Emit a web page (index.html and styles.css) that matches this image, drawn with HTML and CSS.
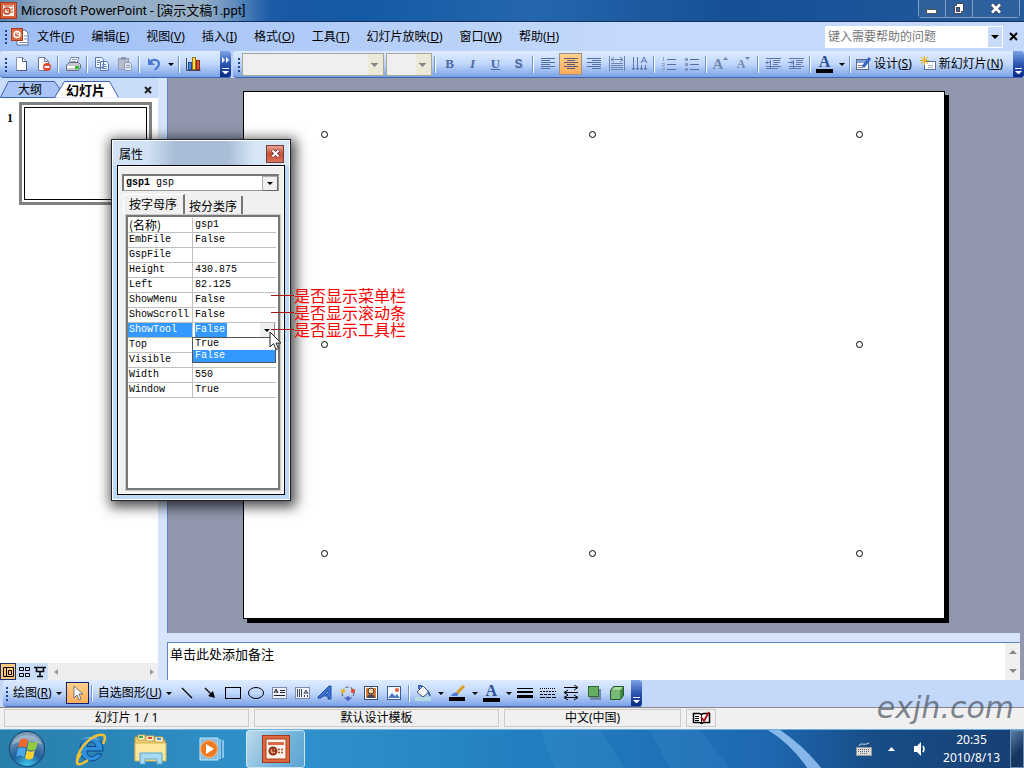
FILE: index.html
```
<!DOCTYPE html>
<html lang="zh-CN">
<head>
  <meta charset="UTF-8">
  <meta name="viewport" content="width=device-width, initial-scale=1.0">
  <title>Microsoft PowerPoint - [演示文稿1.ppt]</title>
  <link rel="stylesheet" href="styles.css">
</head>
<body>
  <!-- Title bar -->
  <header class="titlebar">
    <svg class="app-icon" width="17" height="17" viewBox="0 0 17 17"><rect x="0.5" y="0.5" width="16" height="16" fill="#d9603a" stroke="#a83a1c"/><rect x="3" y="3" width="11" height="11" fill="#fff3ea"/><circle cx="7" cy="9" r="3" fill="none" stroke="#b8431f" stroke-width="1.5"/><path d="M7 9V6M7 9h3M11 7h2M11 10h2M4 4h9" stroke="#b8431f"/></svg>
    <h1>Microsoft PowerPoint - [演示文稿1.ppt]</h1>
    <div class="window-buttons">
      <button aria-label="最小化"><svg width="14" height="14"><rect x="1.5" y="7.5" width="10" height="4" fill="#fff" stroke="#555"/></svg></button>
      <button aria-label="还原"><svg width="14" height="14"><path d="M4.5 1.5h7v8h-2v2h-7v-8h2z" fill="#fff" stroke="#445"/><rect x="4.5" y="5.5" width="3" height="4" fill="#3c6598" stroke="#445"/></svg></button>
      <button class="wide" aria-label="关闭"><svg width="14" height="14"><path d="M3 2.5l8 8M11 2.5l-8 8" stroke="#445" stroke-width="4.5"/><path d="M3 2.5l8 8M11 2.5l-8 8" stroke="#fff" stroke-width="2.6"/></svg></button>
    </div>
  </header>

  <!-- Menu bar -->
  <nav class="menubar">
    <span class="grip"></span>
    <svg class="doc-icon" width="18" height="18" viewBox="0 0 18 18"><path d="M6 2h8l3 3v12H6z" fill="#fff" stroke="#5870a0"/><path d="M13 8h3M13 11h3M8 14.5h8" stroke="#7a8dbb"/><rect x="0.5" y="0.5" width="11" height="12" fill="#dc6a42" stroke="#a83a1c"/><circle cx="6" cy="6.5" r="3" fill="none" stroke="#fff" stroke-width="1.5"/><path d="M6 3.5v3h3" stroke="#fff" fill="none"/></svg>
    <button>文件(<u>F</u>)</button>
    <button>编辑(<u>E</u>)</button>
    <button>视图(<u>V</u>)</button>
    <button>插入(<u>I</u>)</button>
    <button>格式(<u>O</u>)</button>
    <button>工具(<u>T</u>)</button>
    <button>幻灯片放映(<u>D</u>)</button>
    <button>窗口(<u>W</u>)</button>
    <button>帮助(<u>H</u>)</button>
    <div class="help-box">
      <input type="text" placeholder="键入需要帮助的问题" aria-label="键入需要帮助的问题">
      <button aria-label="展开"><span class="caret"></span></button>
    </div>
    <button class="close-doc" aria-label="关闭窗口"><svg width="9" height="9"><path d="M1 1l7 7M8 1l-7 7" stroke="#000" stroke-width="2"/></svg></button>
  </nav>

  <!-- Toolbars -->
  <div class="toolbars">
    <div class="toolbar standard">
      <span class="grip"></span>
      <button class="tool" aria-label="新建"><svg width="16" height="16"><path d="M3.5 1.5h6l4 4v9h-10z" fill="#fff" stroke="#8794b5"/><path d="M9.5 1.5v4h4v9h-10" fill="none" stroke="#4a587e"/></svg></button>
      <button class="tool" aria-label="权限"><svg width="16" height="16"><path d="M2.5 1.5h6l4 4v9h-10z" fill="#fff" stroke="#6d7a9c"/><path d="M8.5 1.5v4h4" fill="none" stroke="#6d7a9c"/><circle cx="11" cy="11" r="4" fill="#e04a2c"/><rect x="8.5" y="10" width="5" height="2" fill="#fff"/></svg></button>
      <span class="sep"></span>
      <button class="tool" aria-label="打印"><svg width="16" height="16"><path d="M6 1.5h8l-2 6H4z" fill="#fff" stroke="#7482a5"/><path d="M1.500 9l3-2.500h9l2 2V12l-2 2.500h-12z" fill="#c4c8ce" stroke="#666f80"/><path d="M7 3.500h5M6 5.500h5" stroke="#8c9bc0"/><rect x="2" y="10" width="9" height="2" fill="#fff"/><rect x="10" y="10" width="4" height="3" fill="#2fbd3a"/></svg></button>
      <span class="sep"></span>
      <button class="tool" aria-label="复制"><svg width="16" height="16"><path d="M1.5 1.5h6l2 2v8h-8zM6.5 5.5h6l2 2v7h-8z" fill="#eef4ff" stroke="#5878b8"/><path d="M3 4.5h3M3 6.5h3M3 8.5h2M8 8.5h4M8 10.5h5M8 12.5h5" stroke="#6f90cd"/></svg></button>
      <button class="tool" aria-label="粘贴"><svg width="16" height="16"><rect x="1.5" y="2.5" width="10" height="11" fill="#b5bdce" stroke="#929cb3"/><rect x="4" y="1" width="5" height="3" fill="#8e99b3"/><path d="M7.5 6.5h5l2 2v6h-7z" fill="#dce3f2" stroke="#929cb3"/><path d="M9 9.5h4M9 11.5h4" stroke="#929cb3"/></svg></button>
      <span class="sep"></span>
      <button class="tool" aria-label="撤消"><svg width="16" height="16"><path d="M4 6c3-4 9-2 9 2 0 3-3 4-4 6" fill="none" stroke="#4a7bd4" stroke-width="2.2"/><path d="M2 2v7h7z" fill="#4a7bd4"/></svg></button>
      <button class="drop" aria-label="撤消列表"><span class="caret"></span></button>
      <span class="sep"></span>
      <button class="tool" aria-label="插入图表"><svg width="17" height="16"><path d="M1.5 2v12.5h14" fill="none" stroke="#445"/><rect x="3.5" y="6.5" width="3" height="7" fill="#4b83e0" stroke="#26488e"/><rect x="7.5" y="1.5" width="3" height="12" fill="#ffe04a" stroke="#9a7412"/><rect x="11.5" y="4.5" width="3" height="9" fill="#dc5430" stroke="#872b15"/></svg></button>
      <button class="more" aria-label="工具栏选项"><svg width="8" height="6"><path d="M0 0l3 3-3 3zM4 0l3 3-3 3z" fill="#fff"/></svg><i></i></button>
    </div>
    <div class="toolbar formatting">
      <span class="grip"></span>
      <select class="font-name" aria-label="字体" disabled><option></option></select>
      <select class="font-size" aria-label="字号" disabled><option></option></select>
      <span class="sep"></span>
      <button class="tool letter">B</button>
      <button class="tool letter italic">I</button>
      <button class="tool letter underline">U</button>
      <button class="tool letter shadow">S</button>
      <span class="sep"></span>
      <button class="tool" aria-label="左对齐"><svg width="16" height="16"><path d="M1 2.5h14M1 4.5h9M1 6.5h14M1 8.5h9M1 10.5h14M1 12.5h9" stroke="#5570a8"/></svg></button>
      <button class="tool pressed" aria-label="居中"><svg width="16" height="16"><path d="M1 2.5h14M4 4.5h8M1 6.5h14M4 8.5h8M1 10.5h14M4 12.5h8" stroke="#5b5d7c"/></svg></button>
      <button class="tool" aria-label="右对齐"><svg width="16" height="16"><path d="M1 2.5h14M6 4.5h9M1 6.5h14M6 8.5h9M1 10.5h14M6 12.5h9" stroke="#5570a8"/></svg></button>
      <button class="tool" aria-label="分散对齐"><svg width="16" height="16"><path d="M0.500 0v15M15.500 0v15M2 3.500h12M5 1l-3 2.500L5 6M11 1l3 2.500L11 6M2 7.500h12M2 9.500h12M2 11.500h12M2 13.500h12" stroke="#6b82b3" fill="none"/></svg></button>
      <button class="tool" aria-label="文字方向"><svg width="16" height="16"><path d="M1.5 1v13M5.5 1v13M9.5 9v5M13.5 9v5M0 12l1.5 2L3 12M4 12l1.5 2L7 12M8 12l1.5 2 1.5-2M12 12l1.5 2 1.5-2M9 7l3-6 3 6M10 5h4" stroke="#5e77ad" fill="none"/></svg></button>
      <span class="sep"></span>
      <button class="tool" aria-label="编号"><svg width="16" height="16"><path d="M6 3.5h9M6 8.5h9M6 13.5h9" stroke="#5570a8"/><path d="M2.5 1v4M1 7.5h2.5v1L1 10h3M1 12.5h3l-2 1h2l-3 1.5" stroke="#93a2c2" fill="none"/></svg></button>
      <button class="tool" aria-label="项目符号"><svg width="16" height="16"><path d="M6 3.5h9M6 8.5h9M6 13.5h9" stroke="#5570a8"/><path d="M1 3.5h3M1 8.5h3M1 13.5h3" stroke="#8697bd" stroke-width="3"/></svg></button>
      <span class="sep"></span>
      <button class="tool letter light" aria-label="增大字号">A<svg width="5" height="16"><path d="M0 4l2.500-3L5 4z" fill="#7286b0"/></svg></button>
      <button class="tool letter light small" aria-label="减小字号">A<svg width="5" height="16"><path d="M0 1h5L2.500 4z" fill="#7286b0"/></svg></button>
      <span class="sep"></span>
      <button class="tool" aria-label="减少缩进量"><svg width="16" height="16"><path d="M1 2.5h15M8 4.5h7M8 6.5h7M8 8.5h5M1 10.5h15M1 12.5h12M5.5 4v9M1 6.5h5M3 4.5l-2 2 2 2" stroke="#6078ae" fill="none"/></svg></button>
      <button class="tool" aria-label="增加缩进量"><svg width="16" height="16"><path d="M1 2.5h15M8 4.5h7M8 6.5h7M8 8.5h5M1 10.5h15M1 12.5h12M5.5 4v9M0 6.5h5M3 4.5l2 2-2 2" stroke="#6078ae" fill="none"/></svg></button>
      <span class="sep"></span>
      <button class="tool letter color" aria-label="字体颜色">A</button>
      <button class="drop" aria-label="字体颜色列表"><span class="caret"></span></button>
      <span class="sep"></span>
      <button class="labelled"><svg width="17" height="16"><rect x="1.5" y="3.5" width="12" height="10" fill="#f4f6fb" stroke="#5b6780"/><rect x="2" y="4" width="11" height="3" fill="#7ea3dc"/><path d="M3 9.5h5M3 11.5h5" stroke="#888"/><path d="M8 11l7-9" stroke="#3766c4" stroke-width="3"/></svg><span>设计(<u>S</u>)</span></button>
      <button class="labelled"><svg width="17" height="16"><rect x="4.5" y="5.5" width="11" height="8" fill="#fff" stroke="#5b6ea0"/><path d="M8 9.5h5M8 11.5h5" stroke="#a9b6d4"/><path d="M4.5 0v9M0 4.5h9M1 1l7 7M8 1L1 8" stroke="#f2b51d"/></svg><span>新幻灯片(<u>N</u>)</span></button>
      <button class="more" aria-label="工具栏选项"><i></i></button>
    </div>
  </div>

  <!-- Work area -->
  <main class="workspace">
    <aside class="outline-pane">
      <div class="pane-tabs">
        <svg class="tab-shapes" width="124" height="19"><path d="M0.5 18.5L8.5 2.5h46l5 7-3 9z" fill="#a9c4f5" stroke="#3c62b4"/><path d="M54.5 18.5L64.5 2.5h45l9 16" fill="#fff" stroke="#3c62b4"/></svg>
        <button>大纲</button>
        <button class="active">幻灯片</button>
        <button class="close-pane" aria-label="关闭"><svg width="8" height="8"><path d="M1 1l6 6M7 1l-6 6" stroke="#222" stroke-width="2"/></svg></button>
      </div>
      <div class="thumbs">
        <span class="num">1</span>
        <div class="thumb"><div></div></div>
      </div>
      <div class="view-bar">
        <button class="on" aria-label="普通视图"><svg width="12" height="12"><path d="M1.5 1.5h10v9h-10zM4.5 1.5v9M6.500 4.500h3v4h-3z" fill="none" stroke="#000"/></svg></button>
        <button aria-label="幻灯片浏览视图"><svg width="12" height="12"><path d="M1.5 1.5h4v3h-4zM7.5 1.5h4v3h-4zM1.5 7.5h4v3h-4zM7.5 7.5h4v3h-4z" fill="none" stroke="#000"/></svg></button>
        <button aria-label="幻灯片放映"><svg width="12" height="12"><path d="M0 1.5h12M2.5 1.5v4h7v-4M6 6v4M3 10.5h6" fill="none" stroke="#000" stroke-width="1.5"/></svg></button>
        <div class="hscroll"><span></span><span></span></div>
      </div>
    </aside>

    <section class="editor">
      <div class="canvas">
        <div class="slide">
          <i></i><i></i><i></i>
          <i></i><b></b><i></i>
          <i></i><i></i><i></i>
        </div>
      </div>
      <div class="notes">
        <p>单击此处添加备注</p>
        <div class="vscroll"><span></span><span></span></div>
      </div>
    </section>
  </main>

  <!-- Drawing toolbar -->
  <div class="drawbar">
    <div class="toolbar">
      <span class="grip"></span>
      <button class="menu"><span>绘图(<u>R</u>)</span><span class="caret"></span></button>
      <button class="tool pressed select" aria-label="选择对象"><svg width="16" height="16"><path d="M5 1v12l3-3 2 5 2-1-2-5h4z" fill="#fff" stroke="#6b7080"/></svg></button>
      <span class="sep"></span>
      <button class="menu"><span>自选图形(<u>U</u>)</span><span class="caret"></span></button>
      <button class="tool" aria-label="直线"><svg width="16" height="16"><path d="M3 3l10 10" stroke="#000" stroke-width="1.2"/></svg></button>
      <button class="tool" aria-label="箭头"><svg width="16" height="16"><path d="M3 3l6 6" stroke="#000" stroke-width="1.2"/><path d="M13 13l-2-7-5 5z"/></svg></button>
      <button class="tool" aria-label="矩形"><svg width="16" height="16"><rect x="0.5" y="2.5" width="15" height="11" fill="none" stroke="#000"/></svg></button>
      <button class="tool" aria-label="椭圆"><svg width="16" height="16"><ellipse cx="8" cy="8" rx="7.5" ry="5.5" fill="none" stroke="#000"/></svg></button>
      <button class="tool" aria-label="文本框"><svg width="16" height="16"><rect x="1.5" y="2.5" width="14" height="11" fill="#eef2fa" stroke="#7e8bab"/><path d="M3 8l2-4 2 4M4 7h3M9 5.5h5M9 7.5h5M3 10.5h11" stroke="#222" fill="none"/></svg></button>
      <button class="tool" aria-label="竖排文本框"><svg width="16" height="16"><rect x="1.5" y="2.5" width="14" height="11" fill="#eef2fa" stroke="#7e8bab"/><path d="M3.5 4v8M5.5 4v8M7.5 4v8M10 9l2-4 2 4M10 8h4M10.5 10v2M13.5 10v2" stroke="#444b60" fill="none"/></svg></button>
      <button class="tool" aria-label="艺术字"><svg width="16" height="16"><path d="M1 12L12 1h2v13h-3v-3H6l-2 2H1zM8 9h3V5z" fill="#3d75d8" fill-rule="evenodd" stroke="#1f489c"/></svg></button>
      <button class="tool" aria-label="组织结构图"><svg width="16" height="16"><circle cx="8" cy="8" r="6" fill="none" stroke="#444" stroke-dasharray="3 2"/><circle cx="3" cy="6" r="2.2" fill="#e2b52e"/><circle cx="13" cy="6" r="2.2" fill="#d44e38"/><circle cx="8" cy="13.5" r="2.2" fill="#5066ce"/></svg></button>
      <button class="tool" aria-label="剪贴画"><svg width="16" height="16"><rect x="1.5" y="1.5" width="13" height="13" fill="#fff" stroke="#3b4a6c"/><rect x="3" y="3" width="10" height="10" fill="#e07b34"/><circle cx="8" cy="6" r="3" fill="#f3d0a4" stroke="#333"/><path d="M4 13c0-5 8-5 8 0z" fill="#454c5f"/></svg></button>
      <button class="tool" aria-label="图片"><svg width="16" height="16"><rect x="1.5" y="1.5" width="13" height="13" fill="#f4f8ff" stroke="#3b5a9c"/><path d="M2 13l4-5 3 3 2-2 3 4z" fill="#4c79c6"/><circle cx="11" cy="5" r="2" fill="#e5603a"/></svg></button>
      <span class="sep"></span>
      <button class="tool" aria-label="填充颜色"><svg width="16" height="16"><rect x="0" y="12" width="16" height="4" fill="#b6dce6"/><path d="M2 7l6-6 6 6-6 5z" fill="#f5f5f5" stroke="#44516f"/><path d="M4 4V1h3M13 6l2 5" stroke="#3867b8" stroke-width="2" fill="none"/></svg></button>
      <button class="drop" aria-label="填充颜色列表"><span class="caret"></span></button>
      <button class="tool" aria-label="线条颜色"><svg width="16" height="16"><rect x="0" y="12" width="16" height="4"/><path d="M2 11c2-4 5-4 8-3l-2 3z" fill="#4a7ad2"/><path d="M8 8l7-7" stroke="#dc9b20" stroke-width="3"/></svg></button>
      <button class="drop" aria-label="线条颜色列表"><span class="caret"></span></button>
      <button class="tool letter color" aria-label="字体颜色">A</button>
      <button class="drop" aria-label="字体颜色列表"><span class="caret"></span></button>
      <button class="tool" aria-label="线型"><svg width="16" height="16"><path d="M0 3.5h16"  stroke="#000"/><path d="M0 7h16" stroke="#000" stroke-width="2"/><path d="M0 11.5h16" stroke="#000" stroke-width="3"/></svg></button>
      <button class="tool" aria-label="虚线线型"><svg width="16" height="16"><path d="M0 3.5h16" stroke="#000" stroke-dasharray="1 1"/><path d="M0 6.5h16" stroke="#000" stroke-dasharray="2 1"/><path d="M0 9.5h16" stroke="#000" stroke-dasharray="3 1"/><path d="M0 12.5h16" stroke="#000" stroke-dasharray="5 1"/></svg></button>
      <button class="tool" aria-label="箭头样式"><svg width="16" height="16"><path d="M1 2.5h13M2 7.5h13M2 12.5h12M11 0l4 2.5L11 5M5 5L1 7.5 5 10M5 10l-4 2.5L5 15M11 10l4 2.5-4 2.5" fill="none" stroke="#000"/></svg></button>
      <button class="tool" aria-label="阴影样式"><svg width="16" height="16"><rect x="4" y="4" width="11" height="11" fill="#7387aa"/><rect x="2.5" y="1.5" width="10" height="10" fill="#65ad61" stroke="#2e6c36"/></svg></button>
      <button class="tool" aria-label="三维效果样式"><svg width="16" height="16"><path d="M1.5 5.5l3-4h10v9l-3 4h-10z" fill="#3f8745" stroke="#24542b"/><path d="M2 6h9v8H2z" fill="#77bb72"/><path d="M5 2h9l-3 3.5H2.5z" fill="#a6d9a0"/></svg></button>
      <button class="more" aria-label="工具栏选项"><i></i></button>
    </div>
  </div>

  <!-- Status bar -->
  <footer class="statusbar">
    <span class="cell long">幻灯片 1 / 1</span>
    <span class="cell long">默认设计模板</span>
    <span class="cell lang">中文(中国)</span>
    <span class="cell spell"><svg width="19" height="14"><path d="M1.5 2.5h6l2 1 2-1h6v9h-6l-2 1-2-1h-6z" fill="#fff" stroke="#000" stroke-width="1.5"/><path d="M9.5 3v10M3 5.5h4M3 7.5h4M3 9.5h4" stroke="#000"/><path d="M9 6l3 4 5-9" fill="none" stroke="#b01818" stroke-width="2"/></svg></span>
    <span class="watermark">exjh.com</span>
  </footer>

  <!-- Windows taskbar -->
  <div class="taskbar">
    <svg class="streaks" width="100%" height="39" viewBox="0 0 1024 39" preserveAspectRatio="none"><path d="M540 0h60l25 39H555zM650 0h50l30 39h-60z" fill="#6ab8ee" opacity="0.100"/><path d="M768 0h12q24 16 42 39h-14Q792 15 768 0z" fill="#a9d4ff" opacity="0.750"/></svg>
    <button class="start" aria-label="开始"><svg width="38" height="38" viewBox="0 0 38 38"><defs><radialGradient id="orb" cx="0.5" cy="1" r="0.9"><stop offset="0" stop-color="#3fd0f5"/><stop offset="0.5" stop-color="#1f5f9c"/><stop offset="1" stop-color="#7c9cb8"/></radialGradient></defs><circle cx="19" cy="19" r="17.5" fill="url(#orb)" stroke="#123c66"/><path d="M4 15C8 2 30 2 34 15c-8-5-22-5-30 0z" fill="#fff" opacity="0.3"/><path d="M12 10c3-2 5-2 8 0l-2 8c-3-2-5-2-8 0z" fill="#ef6a2c"/><path d="M21 11c3 2 5 2 9 0l-2 8c-4 2-6 2-9 0z" fill="#93cc3c"/><path d="M10 19c3-2 5-2 8 0l-2 8c-3-2-5-2-8 0z" fill="#4aa8ea"/><path d="M19 20c3 2 5 2 8 0l-2 8c-3 2-5 2-8 0z" fill="#fbd02f"/></svg></button>
    <button aria-label="Internet Explorer"><svg width="34" height="34" viewBox="0 0 34 34"><path d="M29 22c-4 10-22 10-22-5C7 2 30 2 30 17v2H14c0 7 7 7 9 3zM14 14.500h9c-1-6-8-6-9 0z" fill="#2e8fdc" stroke="#0b4282" fill-rule="evenodd"/><path d="M9 8c4-4 14-5 18 1-6-3-12-3-18-1z" fill="#9bdcff" opacity="0.700"/><path d="M8 21C-1 35 7 34 15 28M4 29C5 14 22 1 30 3c3 1 2 5 0 9" fill="none" stroke="#f3c034" stroke-width="2.500"/></svg></button>
    <button aria-label="资源管理器"><svg width="34" height="34" viewBox="0 0 34 34"><path d="M2 5h10l2 3h18v20H2z" fill="#efcf72" stroke="#c39b38"/><path d="M5 3h7v5H5zM13 4h8v5h-8zM22 5h8v5h-8z" fill="#fff6d7" stroke="#c9a64c"/><path d="M6 4h4v2H6z" fill="#39a845"/><path d="M15 5h4v2h-4z" fill="#dc4b2e"/><path d="M24 6h4v2h-4z" fill="#3a9ad8"/><path d="M2 11h31v18H2z" fill="#fbe89d" stroke="#d6b456"/><path d="M7 32V21h22v11h-5v-5H12v5z" fill="#a6daf3" stroke="#5ba6cc"/></svg></button>
    <button aria-label="Windows Media Player"><svg width="34" height="34" viewBox="0 0 34 34"><path d="M7 6h18v22H7z" fill="#83bfe4" stroke="#c5e7fa"/><path d="M27 7v20M30 8v18" stroke="#a6d6f2" stroke-width="1.500"/><circle cx="16" cy="17" r="8.500" fill="#f07a22" stroke="#ffb475"/><path d="M13 12l8 5-8 5z" fill="#fff"/></svg></button>
    <button class="running" aria-label="Microsoft PowerPoint"><svg width="28" height="28" viewBox="0 0 28 28"><rect x="0.5" y="0.5" width="27" height="27" fill="#dc6842" stroke="#a63818"/><rect x="4" y="4" width="20" height="20" fill="#fff3ea" stroke="#a8401e"/><path d="M16 14.500h6M16 17.500h6" stroke="#b04a26" stroke-width="1.500" stroke-dasharray="2 1"/><rect x="6" y="7" width="16" height="3" fill="#d8694a"/><circle cx="11" cy="16" r="3.500" fill="#f0a080" stroke="#873015" stroke-width="2"/><path d="M11 13v3h4" stroke="#873015" fill="none" stroke-width="1.500"/></svg></button>
    <div class="tray">
      <svg width="16" height="15"><path d="M3 4c1-4 5 0 10-3" fill="none" stroke="#ddd"/><rect x="0.500" y="5.500" width="15" height="8" fill="#ddd" stroke="#999"/><path d="M2 7.500h12M2 9.500h12M4 11.500h8" stroke="#666" stroke-dasharray="1 1"/></svg>
      <svg width="10" height="6"><path d="M1 5h7L4.5 1z" fill="#fff"/></svg>
      <svg width="16" height="16"><path d="M2 5h3l4-4v14l-4-4H2z" fill="#fff"/><path d="M11 5q2 3 0 6" stroke="#fff" fill="none" stroke-width="1.5"/></svg>
    </div>
    <div class="clock"><time>20:35</time><time>2010/8/13</time></div>
    <button class="show-desktop" aria-label="显示桌面"></button>
  </div>

  <!-- Properties window -->
  <div class="properties" role="dialog" aria-labelledby="propTitle">
    <div class="prop-title">
      <h2 id="propTitle">属性</h2>
      <button aria-label="关闭"><svg width="9" height="9"><path d="M1.5 1.5l6 6M7.5 1.5l-6 6" stroke="#53313a" stroke-width="3.5"/><path d="M1.5 1.5l6 6M7.5 1.5l-6 6" stroke="#fff" stroke-width="2"/></svg></button>
    </div>
    <div class="prop-body">
      <button class="object-box" aria-haspopup="listbox"><span><b>gsp1</b> gsp</span><span class="arrow"><span class="caret"></span></span></button>
      <div class="prop-tabs">
        <button class="active">按字母序</button>
        <button>按分类序</button>
      </div>
      <div class="prop-frame">
        <table>
          <tr><th class="cjk">(名称)</th><td>gsp1</td></tr>
          <tr><th>EmbFile</th><td>False</td></tr>
          <tr><th>GspFile</th><td></td></tr>
          <tr><th>Height</th><td>430.875</td></tr>
          <tr><th>Left</th><td>82.125</td></tr>
          <tr><th>ShowMenu</th><td>False</td></tr>
          <tr><th>ShowScroll</th><td>False</td></tr>
          <tr class="current"><th><label for="showTool">ShowTool</label></th><td>
            <div class="edit"><input id="showTool" type="text" value="False"><button aria-label="展开"><span class="caret"></span></button></div>
            <ul class="options"><li>True</li><li class="selected">False</li></ul>
          </td></tr>
          <tr><th>Top</th><td></td></tr>
          <tr><th>Visible</th><td>True</td></tr>
          <tr><th>Width</th><td>550</td></tr>
          <tr><th>Window</th><td>True</td></tr>
        </table>
      </div>
    </div>
  </div>

  <!-- Callouts for the three properties -->
  <ul class="callouts">
    <li>是否显示菜单栏</li>
    <li>是否显示滚动条</li>
    <li>是否显示工具栏</li>
  </ul>
  <svg class="pointer" width="13" height="20" viewBox="0 0 13 20"><path d="M1 1v15l3.5-3.5L7 18.5l2.5-1L7 12h5z" fill="#fff" stroke="#222"/></svg>
</body>
</html>
```
FILE: styles.css
```
* {
  box-sizing: border-box;
}
body {
  margin: 0;
  height: 100vh;
  display: flex;
  flex-direction: column;
  overflow: hidden;
  position: relative;
  font-family: "Noto Sans", "Noto Sans CJK SC", sans-serif;
  font-size: 12px;
  line-height: 16px;
  color: #000;
  background: #c4d8f9;
}
button {
  font: inherit;
  color: inherit;
  padding: 0;
  border: none;
  background: none;
  white-space: nowrap;
}
svg {
  display: block;
  flex: none;
}
.caret {
  display: block;
  width: 6px;
  border: 3px solid transparent;
  border-top-color: #000;
  border-bottom: none;
}

/* Title bar */
.titlebar {
  flex: none;
  height: 22px;
  display: flex;
  align-items: center;
  background: linear-gradient(90deg, #5c84b0, #8fa9c4 40px, #97b0c8 200px, #5f8dbd 235px, #1a5aa6 270px, #1459a5 35%, #2467ad 52%, #154f95 72%, #235b9b);
  border-bottom: 1px solid #17305a;
}
.titlebar h1 {
  margin: 0 auto 0 4px;
  font-family: Roboto, "Noto Sans CJK SC", sans-serif;
  font-size: 13px;
  font-weight: normal;
}
.window-buttons {
  display: flex;
  align-self: flex-start;
  margin-right: 4px;
  border: 1px solid #7f9fc5;
  border-top: none;
  border-radius: 0 0 4px 4px;
}
.window-buttons button {
  width: 27px;
  height: 17px;
  display: flex;
  justify-content: center;
  align-items: center;
  background: #2d609c;
  border-right: 1px solid #7f9fc5;
}
.window-buttons .wide {
  width: 46px;
  border: none;
}

/* Menu bar */
.menubar {
  flex: none;
  height: 29px;
  display: flex;
  align-items: center;
  gap: 17px;
  padding: 0 6px 0 4px;
  background: linear-gradient(90deg, #9ebef5, #c4d9fb 60%);
}
.grip {
  flex: none;
  width: 5px;
  height: 15px;
  background: radial-gradient(circle at 2px 2px, #20418c 1px, transparent 1px) 0 0 / 5px 4px;
}
.menubar .grip {
  margin-right: -15px;
}
.doc-icon {
  margin-right: -9px;
}
.help-box {
  display: flex;
  width: 178px;
  height: 22px;
  margin-left: auto;
  margin-right: -11px;
  background: #fff;
}
.help-box input {
  flex: 1;
  min-width: 0;
  padding: 0 3px;
  border: none;
  font: inherit;
}
.help-box input::placeholder {
  color: #777;
}
.help-box button {
  width: 14px;
  margin: 1px;
  background: #c8dcfa;
  padding: 0 3px;
}
.help-box .caret {
  width: 8px;
  border-width: 4px;
  border-bottom: none;
}

/* Toolbars */
.toolbars {
  flex: none;
  display: flex;
  gap: 2px;
  height: 27px;
  background: #bcd3f8;
}
.toolbar {
  display: flex;
  align-items: center;
  height: 27px;
  padding-left: 4px;
  background: linear-gradient(#dfecff, #c0d7fb 50%, #7ba2e7);
  border-bottom: 1px solid #3f66b5;
  border-radius: 4px 2px 2px 4px;
}
.standard {
  flex: none;
  width: 231px;
}
.formatting {
  flex: 1;
}
.tool {
  flex: none;
  width: 23px;
  height: 22px;
  display: flex;
  align-items: center;
  justify-content: center;
}
.pressed {
  background: linear-gradient(#ffd08a, #ffad5c);
  border: 1px solid #98908a;
}
.select {
  border-color: #10206c;
}
.drop {
  width: 11px;
  padding-left: 3px;
}
.sep {
  flex: none;
  width: 6px;
  height: 17px;
  background: linear-gradient(90deg, transparent 2px, #6f93d0 2px, #6f93d0 3px, #fff 3px, #fff 4px, transparent 4px);
}
.more {
  flex: none;
  width: 11px;
  height: 26px;
  margin-left: auto;
  display: flex;
  flex-direction: column;
  align-items: center;
  justify-content: flex-end;
  gap: 5px;
  padding-bottom: 3px;
  background: linear-gradient(#7da3e8, #2c56b0 50%, #082a84);
  border-radius: 0 3px 3px 0;
}
.more i {
  width: 7px;
  height: 6px;
  background: linear-gradient(#fff 1px, transparent 1px);
}
.more i::after {
  content: "";
  display: block;
  border: 3px solid transparent;
  border-top-color: #fff;
  border-bottom: none;
  margin-top: 3px;
}
.toolbar select {
  flex: none;
  appearance: none;
  height: 23px;
  border: 1px solid #a5a79c;
  border-radius: 0;
  background: linear-gradient(135deg, #888 50%, transparent 50%) no-repeat right 4px top 9px / 4px 4px, linear-gradient(225deg, #888 50%, transparent 50%) no-repeat right 8px top 9px / 4px 4px, linear-gradient(#ece9d8, #ece9d8) no-repeat right / 15px 100%, #efefef;
  opacity: 1;
}
.toolbar .font-name {
  width: 142px;
  margin-right: 2px;
}
.toolbar .font-size {
  width: 46px;
}
.letter {
  font-family: "Liberation Serif", serif;
  font-weight: bold;
  font-size: 13px;
  color: #4d6aa6;
}
.italic {
  font-style: italic;
}
.underline {
  text-decoration: underline;
}
.shadow {
  font-family: "Liberation Sans", sans-serif;
  font-size: 12px;
  text-shadow: 1px 1px #a3b6db;
}
.light {
  color: #7286b0;
  font-size: 15px;
}
.light.small {
  font-size: 12px;
}
.color {
  color: #2d4f94;
  font-size: 16px;
  line-height: 14px;
}
.color.tool {
  width: 17px;
  height: 17px;
  margin: 0 3px;
  border-bottom: 4px solid #000;
}
.labelled {
  display: flex;
  align-items: center;
  gap: 2px;
  padding: 0 2px;
}
.labelled + .labelled {
  padding-left: 6px;
}

/* Work area */
.workspace {
  flex: 1;
  min-height: 0;
  display: flex;
}
.outline-pane {
  flex: none;
  width: 158px;
  display: flex;
  flex-direction: column;
  background: #fff;
}
.pane-tabs {
  position: relative;
  display: flex;
  align-items: flex-end;
  height: 20px;
  padding-left: 18px;
  background: #c9dcfa;
}
.tab-shapes {
  position: absolute;
  left: 0;
  bottom: 0;
}
.pane-tabs button {
  position: relative;
  height: 17px;
}
.pane-tabs .active {
  margin-left: 24px;
  font-size: 13px;
  font-weight: bold;
}
.pane-tabs .close-pane {
  margin: 0 6px 0 auto;
}
.thumbs {
  flex: 1;
  display: flex;
  align-items: flex-start;
  padding: 4px 6px 0 7px;
}
.num {
  width: 12px;
  padding-top: 8px;
  font-family: "Liberation Serif", serif;
  font-weight: bold;
}
.thumb {
  flex: 1;
  padding: 2px;
  border: 3px solid #808080;
}
.thumb div {
  height: 93px;
  border: 1px solid #000;
}
.view-bar {
  display: flex;
  height: 17px;
  background: #c9dcfa;
}
.view-bar button {
  width: 16px;
  display: flex;
  align-items: center;
  justify-content: center;
}
.view-bar .on {
  border: 1px solid #1d2c6c;
  background: #ffc77c;
}
.hscroll {
  flex: 1;
  display: flex;
  justify-content: space-between;
  align-items: center;
  padding: 0 4px 0 6px;
  background: #eee;
}
.hscroll span {
  border: 3px solid transparent;
  border-right: 4px solid #999;
  border-left: none;
}
.hscroll span + span {
  border-right: none;
  border-left: 4px solid #999;
}
.editor {
  flex: 1;
  min-width: 0;
  display: flex;
  flex-direction: column;
  border-left: 9px solid #d6e5fb;
  background: #9198ae;
}
.canvas {
  flex: 1;
  display: flex;
  padding: 13px 79px 14px 75px;
  border-left: 1px solid #5c85cc;
}
.slide {
  flex: 1;
  display: grid;
  grid-template-columns: repeat(3, 7px);
  grid-template-rows: repeat(3, 7px);
  justify-content: space-between;
  align-content: space-between;
  padding: 39px 81px 61px 77px;
  background: #fff;
  border: 1px solid #000;
  box-shadow: 4px 4px #000;
}
.slide i {
  border: 1px solid #000;
  border-radius: 50%;
}
.notes {
  height: 47px;
  display: flex;
  margin-right: 4px;
  background: #fff;
  border-top: 9px solid #d6e5fb;
  box-shadow: inset 1px 1px #5c85cc;
}
.notes p {
  flex: 1;
  margin: 4px 3px;
  font-size: 13px;
}
.vscroll {
  width: 15px;
  margin-top: 1px;
  display: flex;
  flex-direction: column;
  align-items: center;
  justify-content: space-between;
  padding: 7px 0;
  background: #f0f0f0;
}
.vscroll span {
  border: 4px solid transparent;
  border-bottom-color: #888;
  border-top: none;
}
.vscroll span + span {
  border-top: 4px solid #888;
  border-bottom: none;
}

/* Drawing toolbar */
.drawbar {
  flex: none;
  display: flex;
  padding-left: 3px;
}
.drawbar .toolbar {
  padding-left: 2px;
}
.menu {
  display: flex;
  align-items: center;
  gap: 4px;
  padding: 0 4px 0 3px;
}
.drawbar .more {
  margin-left: 2px;
}

/* Status bar */
.statusbar {
  flex: none;
  position: relative;
  height: 22px;
  display: flex;
  gap: 5px;
  padding: 1px 4px 2px;
  background: #f0f0f0;
  border-top: 1px solid #888;
}
.cell {
  display: flex;
  justify-content: center;
  align-items: center;
  border: 1px solid #ccc;
}
.long {
  width: 245px;
}
.lang {
  width: 177px;
}
.spell {
  width: 30px;
}
.watermark {
  position: absolute;
  right: 10px;
  bottom: 3px;
  font-family: "DejaVu Sans", sans-serif;
  font-style: italic;
  font-weight: 200;
  font-size: 30px;
  line-height: 36px;
  color: rgba(75, 82, 96, 0.7);
}

/* Taskbar */
.taskbar {
  flex: none;
  position: relative;
  height: 39px;
  display: flex;
  align-items: center;
  padding-left: 8px;
  background: linear-gradient(90deg, #287eab, #3093cd 28%, #2380c0 50%, #1e68b1 75%, #184d88 85%, #173f72);
  border-top: 1px solid #6cb0dd;
}
.streaks {
  position: absolute;
  left: 0;
  top: 0;
}
.taskbar button {
  position: relative;
  width: 60px;
  height: 38px;
  display: flex;
  align-items: center;
  justify-content: center;
}
.taskbar .start {
  width: 38px;
  margin-right: 14px;
}
.taskbar .running {
  width: 59px;
  margin-left: 6px;
  border: 1px solid #cbe5f5;
  border-radius: 3px;
  background: linear-gradient(120deg, #bcdaeb, #74b4da 60%, #5aa5d3);
}
.tray {
  position: relative;
  display: flex;
  align-items: center;
  gap: 15px;
  margin-left: auto;
}
.clock {
  position: relative;
  display: flex;
  flex-direction: column;
  align-items: center;
  margin: 0 10px 0 15px;
  line-height: 18px;
  color: #fff;
}
.taskbar .show-desktop {
  width: 14px;
  border: 1px solid #6d8fb3;
  background: linear-gradient(135deg, #5b7fa6, #16365f 60%);
}

/* Properties window */
.properties {
  position: absolute;
  left: 111px;
  top: 139px;
  width: 180px;
  height: 362px;
  display: flex;
  flex-direction: column;
  padding: 0 5px 5px;
  border: 1px solid #1c2531;
  box-shadow: inset 0 0 0 1px #fff, 2px 3px 12px 3px rgba(0, 0, 0, 0.7);
  background: linear-gradient(90deg, #d3e3f5 20%, #a9bdd6 35%, #a9bdd6 65%, #d8e7f7 80%) no-repeat top / 100% 26px, #bdd9f6;
  font-family: "Liberation Mono", "Noto Sans CJK SC", monospace;
  font-size: 10px;
  line-height: 14px;
}
.prop-title {
  height: 25px;
  display: flex;
  justify-content: space-between;
  align-items: center;
  padding: 2px 1px 0 2px;
}
.prop-title h2 {
  margin: 0;
  font-family: "Noto Sans CJK SC", sans-serif;
  font-size: 12px;
  font-weight: normal;
}
.prop-title button {
  width: 18px;
  height: 18px;
  display: flex;
  justify-content: center;
  align-items: center;
  border: 1px solid #7a3c38;
  background: linear-gradient(#e9a394, #c84c34 50%, #d97459);
}
.prop-body {
  flex: 1;
  display: flex;
  flex-direction: column;
  padding: 8px 3px 4px 4px;
  background: #f0f0f0;
  border: 1px solid #000;
  box-shadow: inset 0 0 0 1px #fff;
}
.object-box {
  display: flex;
  justify-content: space-between;
  align-items: center;
  height: 17px;
  margin-right: 2px;
  padding-left: 2px;
  background: #fff;
  border: 1px solid #999;
  border-top: 2px solid #777;
  border-left: 2px solid #777;
  white-space: pre;
}
.arrow {
  padding: 5px 4px;
  background: #f0f0f0;
  border: 1px solid #aaa;
  border-right-color: #666;
  border-bottom-color: #666;
}
.prop-tabs {
  display: flex;
  align-items: flex-end;
  height: 24px;
  padding-left: 1px;
  font-family: "Noto Sans CJK SC", sans-serif;
  font-size: 12px;
  line-height: 16px;
}
.prop-tabs button {
  height: 19px;
  padding: 0 4px;
  border-right: 2px solid #777;
}
.prop-tabs .active {
  height: 21px;
  padding: 0 6px 2px 5px;
  border-top: 1px solid #fff;
  border-left: 1px solid #fff;
}
.prop-frame {
  flex: 1;
  margin: 0 1px 0 4px;
  padding: 1px 2px 1px 0;
  background: #fff;
  border: 2px solid #777;
  outline: 1px solid #ccc;
}
.prop-frame table {
  width: 100%;
  table-layout: fixed;
  border-collapse: separate;
  border-spacing: 0;
}
.prop-frame tr {
  height: 15px;
}
.prop-frame th,
.prop-frame td {
  height: 15px;
  padding: 0 1px;
  border-bottom: 1px solid #c0c0c0;
  font-weight: normal;
  text-align: left;
  white-space: nowrap;
}
.prop-frame th {
  width: 65px;
  border-right: 1px solid #c0c0c0;
}
.prop-frame td {
  position: relative;
  padding-left: 2px;
}
.prop-frame .cjk {
  font-family: "Noto Sans CJK SC", sans-serif;
  font-size: 12px;
}
.current th {
  color: #fff;
  background: #3399ff;
}
.edit {
  display: flex;
  justify-content: space-between;
  height: 14px;
}
.edit input {
  width: 32px;
  padding: 0;
  border: none;
  font: inherit;
  color: #fff;
  background: #3399ff;
}
.edit button {
  padding: 0 4px;
  background: #f0f0f0;
  border-right: 1px solid #888;
}
.options {
  position: absolute;
  left: -1px;
  right: 0;
  top: 14px;
  z-index: 1;
  margin: 0;
  padding: 0;
  list-style: none;
  line-height: 12px;
  background: #fff;
  border: 1px solid #555;
}
.options li {
  padding-left: 2px;
}
.options .selected {
  color: #fff;
  background: #3399ff;
}

/* Callouts */
.callouts {
  position: absolute;
  left: 271px;
  top: 287px;
  z-index: 2;
  margin: 0;
  padding: 0;
  list-style: none;
  font-family: "Noto Sans CJK SC", sans-serif;
  font-size: 16px;
  line-height: 17px;
  color: #f00;
}
.callouts li {
  display: flex;
  align-items: center;
}
.callouts li::before {
  content: "";
  width: 23px;
  height: 1px;
  background: linear-gradient(90deg, #8c2222, #c00);
}
.pointer {
  position: absolute;
  left: 269px;
  top: 331px;
  z-index: 3;
}
```
